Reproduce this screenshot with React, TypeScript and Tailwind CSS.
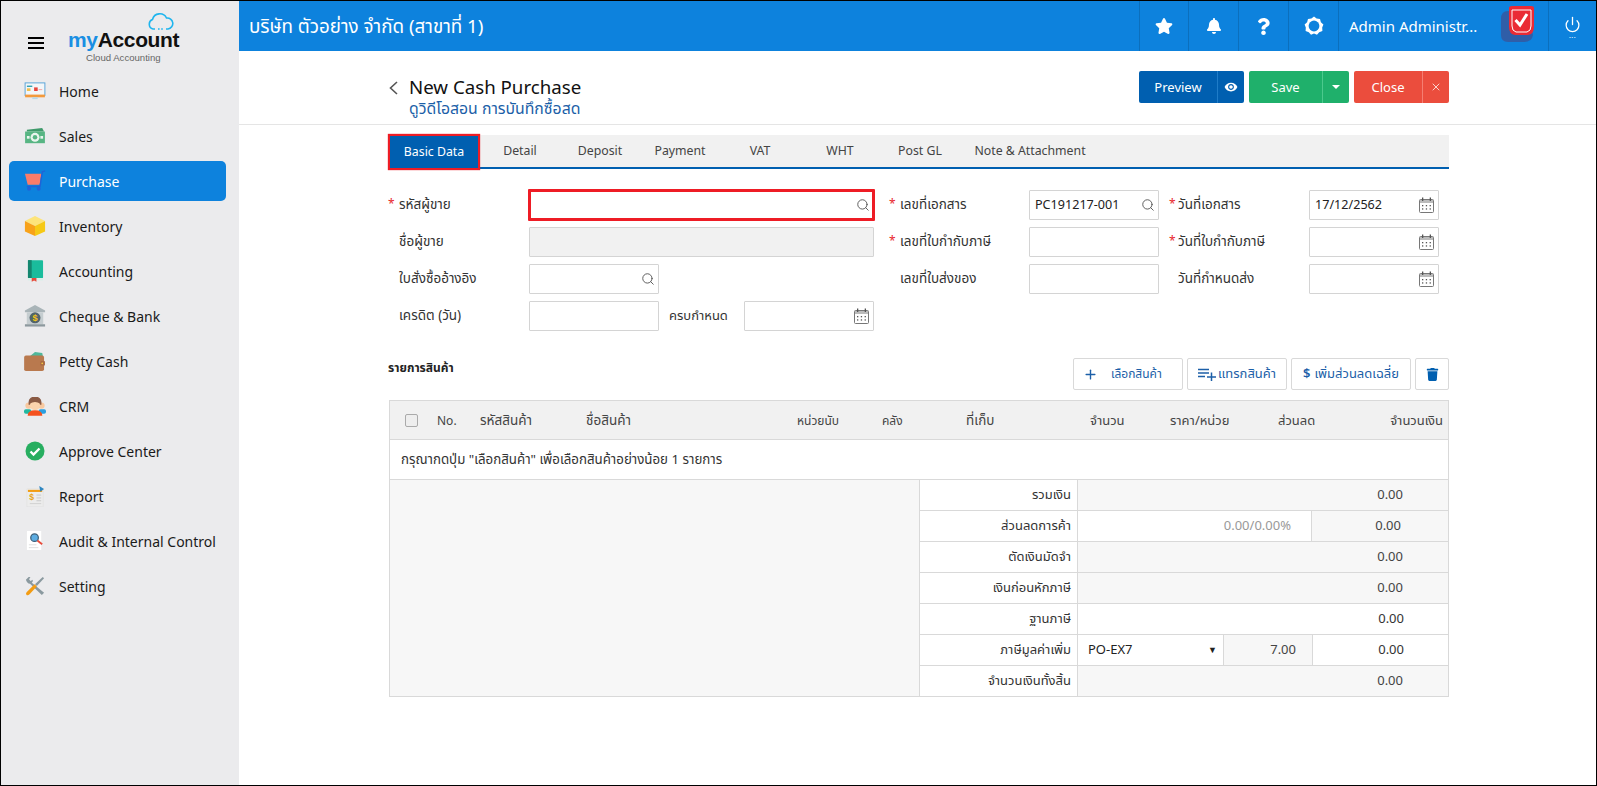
import React from "react";
import { FaStar, FaBell, FaQuestion, FaTrash } from "react-icons/fa";
import { MdRemoveRedEye } from "react-icons/md";
import { Search, Plus, X, Power } from "lucide-react";

const IconHome = () => (
  <svg width="22" height="18" viewBox="0 0 24 20">
    <rect x="1" y="1" width="22" height="14" fill="#f3f6f8" stroke="#4f9fd8" strokeWidth="1" />
    <rect x="1" y="14" width="22" height="3" fill="#f39a3c" />
    <rect x="9" y="17" width="6" height="2" fill="#b8d8e8" />
    <rect x="3" y="4" width="6" height="1.5" fill="#2a9fb0" />
    <rect x="3" y="7" width="4" height="3" fill="#f2c14e" />
    <rect x="11" y="6" width="4" height="4" fill="#e8453c" />
    <rect x="16" y="8" width="4" height="1" fill="#f2a0a0" />
  </svg>
);
const IconSales = () => (
  <svg width="22" height="18" viewBox="0 0 24 20">
    <path d="M3 3 L20 1 L22 5 L3 5Z" fill="#3f9a6b" />
    <rect x="1" y="5" width="22" height="13" fill="#57b583" />
    <circle cx="12" cy="11.5" r="5" fill="#e9f5ee" />
    <circle cx="12" cy="11.5" r="2.5" fill="#57b583" />
    <rect x="3" y="10" width="3" height="3" fill="#e9f5ee" />
    <rect x="18" y="10" width="3" height="3" fill="#e9f5ee" />
  </svg>
);
const IconCart = () => (
  <svg width="22" height="22" viewBox="0 0 24 24">
    <path d="M1 4 H19 L17 16 H4Z" fill="#fb7c6a" />
    <path d="M23 1 L20 2 L17.5 18 H3" fill="none" stroke="#1f63d8" strokeWidth="1.5" />
    <circle cx="5.5" cy="20.5" r="2.2" fill="#1f63d8" />
    <circle cx="16" cy="20.5" r="2.2" fill="#1f63d8" />
  </svg>
);
const IconBox = () => (
  <svg width="22" height="22" viewBox="0 0 24 24">
    <path d="M12 1 L23 6.5 L12 12 L1 6.5Z" fill="#fde47a" />
    <path d="M1 6.5 L12 12 V23 L1 18Z" fill="#f8a219" />
    <path d="M23 6.5 L12 12 V23 L23 18Z" fill="#f6c915" />
  </svg>
);
const IconBook = () => (
  <svg width="17" height="22" viewBox="0 0 18 23">
    <rect x="1" y="0" width="16" height="19" rx="1" fill="#1abc9c" />
    <rect x="1" y="0" width="4" height="19" fill="#14866f" />
    <rect x="1" y="19" width="16" height="2.5" fill="#d7efe8" />
    <path d="M5 19 H10 V23 L7.5 21.5 L5 23Z" fill="#e74c3c" />
  </svg>
);
const IconBank = () => (
  <svg width="22" height="22" viewBox="0 0 24 24">
    <path d="M12 0 L23 6 V8 H1 V6Z" fill="#a9b4b8" />
    <rect x="3" y="8" width="18" height="13" fill="#c5cdd0" />
    <circle cx="12" cy="14" r="6" fill="#52646b" />
    <text x="12" y="17.5" textAnchor="middle" fontSize="10" fontWeight="700" fill="#f5c518" fontFamily="Liberation Sans">$</text>
    <rect x="1" y="21" width="22" height="2.5" fill="#8d999e" />
  </svg>
);
const IconWallet = () => (
  <svg width="22" height="19" viewBox="0 0 24 21">
    <path d="M6 5 L12 0 L20 1 L21 6Z" fill="#4fb79a" />
    <rect x="0" y="4" width="22" height="17" rx="2" fill="#b9794e" />
    <rect x="18" y="10" width="5" height="5" rx="1" fill="#a86a42" />
    <circle cx="20" cy="12.5" r="1" fill="#f4c542" />
  </svg>
);
const IconCrm = () => (
  <svg width="22" height="19" viewBox="0 0 24 20">
    <circle cx="5" cy="9" r="3.5" fill="#f8c9a0" />
    <circle cx="19" cy="9" r="3.5" fill="#f8c9a0" />
    <rect x="0" y="13" width="8" height="5" rx="2" fill="#22b8a0" />
    <rect x="16" y="13" width="8" height="5" rx="2" fill="#2a9fe0" />
    <path d="M5 5 A7 6 0 0 1 19 5 V8 H5Z" fill="#8a5a44" />
    <circle cx="12" cy="8.5" r="5.5" fill="#fbd3ad" />
    <path d="M6 7 A6 5.5 0 0 1 18 7 Q12 3 6 7Z" fill="#8a5a44" />
    <path d="M4 20 Q4 14 12 14 Q20 14 20 20Z" fill="#f4511e" />
  </svg>
);
const IconApprove = () => (
  <svg width="20" height="20" viewBox="0 0 20 20">
    <circle cx="10" cy="10" r="9.5" fill="#27ae60" />
    <path d="M5.5 10.5 L8.5 13.5 L14.5 7.5" fill="none" stroke="#fff" strokeWidth="2.4" />
  </svg>
);
const IconReport = () => (
  <svg width="19" height="21" viewBox="0 0 20 22">
    <rect x="1" y="3" width="17" height="19" fill="#ececec" stroke="#dcdcdc" strokeWidth="0.5" />
    <rect x="2" y="4" width="15" height="2.2" fill="#f39c12" />
    <path d="M14 0 L19 3 L15 6Z" fill="#2e86c1" />
    <text x="6" y="15" textAnchor="middle" fontSize="9" fontWeight="700" fill="#e8a317" fontFamily="Liberation Sans">$</text>
    <rect x="11" y="9" width="5" height="1" fill="#c8c8c8" />
    <rect x="11" y="12" width="5" height="1" fill="#c8c8c8" />
    <rect x="11" y="15" width="5" height="1" fill="#c8c8c8" />
    <rect x="4" y="18" width="12" height="1" fill="#d0d0d0" />
  </svg>
);
const IconAudit = () => (
  <svg width="19" height="20" viewBox="0 0 20 21">
    <rect x="1" y="0" width="15" height="20" fill="#fff" />
    <rect x="3" y="14" width="8" height="1" fill="#ddd" />
    <rect x="3" y="17" width="10" height="1" fill="#ddd" />
    <circle cx="9" cy="7" r="4" fill="#5dade2" stroke="#3b5e78" strokeWidth="1.3" />
    <path d="M12 10 L17 14" stroke="#e74c3c" strokeWidth="2" />
  </svg>
);
const IconTools = () => (
  <svg width="20" height="20" viewBox="0 0 22 22">
    <path d="M1 4 L4 1 L6 1 L4.5 3.5 L6 5.5 L8.5 4 L8.5 6 L7.5 7.5 L21 18.5 L18.5 21 L5.5 8.5 Q2 8 1 4Z" fill="#8a999f" />
    <path d="M21 2.5 L19.5 1 L11 9 L13 11Z" fill="#8a999f" />
    <path d="M10.5 9 L13 11.5 L5 20 Q3 22 1.5 20.5 Q0.5 19 2 17.5Z" fill="#f39c12" />
  </svg>
);

const nav: [string, React.ReactNode][] = [
  ["Home", <IconHome />],
  ["Sales", <IconSales />],
  ["Purchase", <IconCart />],
  ["Inventory", <IconBox />],
  ["Accounting", <IconBook />],
  ["Cheque & Bank", <IconBank />],
  ["Petty Cash", <IconWallet />],
  ["CRM", <IconCrm />],
  ["Approve Center", <IconApprove />],
  ["Report", <IconReport />],
  ["Audit & Internal Control", <IconAudit />],
  ["Setting", <IconTools />],
];

const GearRing = () => (
  <svg width="20" height="20" viewBox="0 0 20 20">
    <path d="M10 0.5 L12.6 2.6 L16 2.9 L16.9 6.2 L19.4 8.5 L18.2 11.6 L18.4 15 L15.2 16.2 L13 18.8 L10 17.4 L7 18.8 L4.8 16.2 L1.6 15 L1.8 11.6 L0.6 8.5 L3.1 6.2 L4 2.9 L7.4 2.6Z" fill="#fff" />
    <circle cx="10" cy="10" r="5.4" fill="#0d82dd" />
  </svg>
);

const Calendar = () => (
  <svg width="15" height="16" viewBox="0 0 15 16">
    <rect x="0.5" y="2.5" width="14" height="13" rx="1" fill="#fff" stroke="#777" />
    <rect x="1" y="3" width="13" height="3" fill="#bbb" />
    <rect x="3" y="0.5" width="1.3" height="3.5" fill="#555" />
    <rect x="10.7" y="0.5" width="1.3" height="3.5" fill="#555" />
    <g fill="#555">
      <rect x="3" y="8" width="1.3" height="1.3" /><rect x="6.8" y="8" width="1.3" height="1.3" /><rect x="10.6" y="8" width="1.3" height="1.3" />
      <rect x="3" y="11.3" width="1.3" height="1.3" /><rect x="6.8" y="11.3" width="1.3" height="1.3" /><rect x="10.6" y="11.3" width="1.3" height="1.3" />
    </g>
  </svg>
);

const Label = ({ text, req, narrow }: { text: string; req?: boolean; narrow?: boolean }) => (
  <div className="flex items-center h-[30px] pb-[2px] text-[13.5px] text-[#333]">
    <span className={`${narrow ? "w-[9px]" : "w-[11px]"} text-[#e8262c] text-[12px] leading-none`}>{req ? "*" : ""}</span>
    <span>{text}</span>
  </div>
);

const Field = ({ w, icon, value, gray, red }: { w: string; icon?: "s" | "c"; value?: string; gray?: boolean; red?: boolean }) => (
  <div
    className={`${w} flex items-center justify-between text-[12.6px] text-[#222] rounded-[1px] ${
      red ? "h-[32px] pl-[5px] pr-[2px] border-[3px] border-[#ee1c25] -m-[1px]" : "h-[30px] pl-[5px] pr-[3px] border border-[#d4d4d4]"
    } ${gray ? "bg-[#f1f1f1]" : "bg-white"}`}
  >
    <span>{value}</span>
    {icon === "s" && <Search size={14} color="#555" strokeWidth={1.6} className="shrink-0" />}
    {icon === "c" && <span className="shrink-0 mr-[1px]"><Calendar /></span>}
  </div>
);

const SumRow = ({ label, children }: { label: string; children: React.ReactNode }) => (
  <div className="flex h-[31px] border-b border-[#d9d9d9] text-[13px]">
    <div className="w-[158px] shrink-0 border-r border-[#d9d9d9] flex items-center justify-end pr-[6px] text-[#333]">{label}</div>
    {children}
  </div>
);
const Gray = ({ v }: { v: string }) => (
  <div className="flex-1 bg-[#f7f7f7] flex items-center justify-end pr-[45px] text-[#444]">{v}</div>
);

export default function App() {
  return (
    <div
      className="w-[1597px] h-[786px] border border-black flex overflow-hidden bg-white"
      style={{ fontFamily: '"Noto Sans", "Noto Sans Thai", Tahoma, sans-serif' }}
    >
      <aside className="w-[238px] shrink-0 bg-[#ebebed] flex flex-col">
        <div className="h-[70px] shrink-0 relative">
          <div className="absolute left-[27px] top-[36px] w-[16px] flex flex-col gap-[3px]">
            <div className="h-[2px] bg-black" />
            <div className="h-[2px] bg-black" />
            <div className="h-[2px] bg-black" />
          </div>
          <svg className="absolute left-[146px] top-[12px]" width="27" height="18" viewBox="0 0 27 18">
            <path d="M8 16 H6 A5 5 0 0 1 5.5 6.5 A7.5 7.5 0 0 1 19.5 5 A5.5 5.5 0 0 1 21 16 H19" fill="none" stroke="#1fb5ee" strokeWidth="1.6" />
            <path d="M11 16 H16.5" stroke="#1fb5ee" strokeWidth="1.6" strokeDasharray="1.6 1.6" />
          </svg>
          <div className="absolute left-[67px] top-[24px] text-[21px] leading-[30px] font-bold tracking-[-0.35px]" style={{ fontFamily: '"Liberation Sans", sans-serif' }}>
            <span className="text-[#1a8fe3]">my</span><span className="text-[#111]">Account</span>
          </div>
          <div className="absolute left-[85px] top-[50px] text-[9.6px] leading-[13px] text-[#666]" style={{ fontFamily: '"Liberation Sans", sans-serif' }}>Cloud Accounting</div>
        </div>
        <nav className="flex flex-col gap-[5px] ml-[8px] w-[217px]">
          {nav.map(([name, icon]) => (
            <div
              key={name}
              className={`h-[40px] rounded-[5px] flex items-center text-[14px] ${name === "Purchase" ? "bg-[#0d82dd] text-white" : "text-[#1a1a1a]"}`}
            >
              <span className="w-[50px] shrink-0 flex justify-center pl-[2px]">{icon}</span>
              <span>{name}</span>
            </div>
          ))}
        </nav>
      </aside>

      <main className="flex-1 flex flex-col min-w-0">
        <header className="h-[50px] shrink-0 bg-[#0d82dd] flex items-center text-white">
          <div className="flex-1 pl-[10px] text-[18.8px]">บริษัท ตัวอย่าง จำกัด (สาขาที่ 1)</div>
          <div className="w-[49px] h-full border-l border-[#0b6fbd] flex items-center justify-center"><FaStar size={18} /></div>
          <div className="w-[50px] h-full border-l border-[#0b6fbd] flex items-center justify-center"><FaBell size={16} /></div>
          <div className="w-[50px] h-full border-l border-[#0b6fbd] flex items-center justify-center"><FaQuestion size={17} /></div>
          <div className="w-[50px] h-full border-l border-[#0b6fbd] flex items-center justify-center"><GearRing /></div>
          <div className="w-[210px] h-full border-l border-[#0b6fbd] flex items-center pl-[10px] relative">
            <span className="text-[15px]">Admin Administr...</span>
            <svg className="absolute right-[12px] top-[4px]" width="36" height="42" viewBox="0 0 36 42">
              <path d="M1 14 Q1 6 8 6 L26 6 L33 30 Q32 37 24 37 L8 37 Q1 37 1 30Z" fill="#2f5ea8" />
              <path d="M9 3 Q9 1 12 1 H31 Q34 1 34 3 V22 Q34 29 28 30 H15 Q9 29 9 22Z" fill="#ea2b35" />
              <path d="M12 5 H31 V21 Q31 26 27 27 H16 Q12 26 12 21Z" fill="none" stroke="#fff" strokeWidth="1" />
              <path d="M15.5 15 L20 20 L27 9" fill="none" stroke="#fff" strokeWidth="3" />
            </svg>
          </div>
          <div className="w-[48px] h-full border-l border-[#0b6fbd] flex flex-col items-center justify-center">
            <Power size={17} strokeWidth={1.8} />
            <span className="text-[7px] leading-[6px] tracking-[0.5px] h-[4px]">...</span>
          </div>
        </header>

        <div className="h-[74px] shrink-0 border-b border-[#e5e5e5] pl-[149px] pr-[147px] flex items-start justify-between">
          <div className="flex items-start mt-[22px]">
            <svg width="9" height="14" viewBox="0 0 9 14" className="mt-[8px] ml-[1px] mr-[11px]">
              <path d="M8 1 L1.5 7 L8 13" fill="none" stroke="#555" strokeWidth="1.6" />
            </svg>
            <div>
              <div className="text-[18.7px] leading-[27px] text-[#111]">New Cash Purchase</div>
              <div className="text-[15.8px] leading-[20px] -mt-[2px] text-[#1c5fa8]">ดูวิดีโอสอน การบันทึกซื้อสด</div>
            </div>
          </div>
          <div className="flex gap-[5px] text-white text-[13px] mt-[20px]">
            <div className="flex w-[105px] h-[32px] bg-[#005fb0] rounded-[2px]">
              <div className="w-[79px] pt-[1px] flex items-center justify-center border-r border-[#1f7cc8]">Preview</div>
              <div className="flex-1 flex items-center justify-center"><MdRemoveRedEye size={14} /></div>
            </div>
            <div className="flex w-[100px] h-[32px] bg-[#1fb06b] rounded-[2px]">
              <div className="w-[74px] pt-[1px] flex items-center justify-center border-r border-[#4cc98d]">Save</div>
              <div className="flex-1 flex items-center justify-center"><span className="w-0 h-0 border-l-[4px] border-r-[4px] border-t-[4px] border-l-transparent border-r-transparent border-t-white" /></div>
            </div>
            <div className="flex w-[95px] h-[32px] bg-[#eb4d3d] rounded-[2px]">
              <div className="w-[69px] pt-[1px] flex items-center justify-center border-r border-[#f57e72]">Close</div>
              <div className="flex-1 flex items-center justify-center"><X size={12} strokeWidth={1.5} /></div>
            </div>
          </div>
        </div>

        <div className="pl-[149px] pr-[147px] pt-[10px]">
          <div className="flex h-[34px] bg-[#f1f1f1] border-b-2 border-[#005fb0] text-[12.3px] text-[#444]">
            <div className="w-[92px] h-[36px] -mt-[1px] pt-[1px] border-[2px] border-[#ee1c25] shadow-[0_0_1px_#ee1c25] bg-[#005fb0] text-white flex items-center justify-center">Basic Data</div>
            {["Detail", "Deposit", "Payment", "VAT", "WHT", "Post GL"].map((t) => (
              <div key={t} className="w-[80px] pt-[1px] flex items-center justify-center">{t}</div>
            ))}
            <div className="w-[140px] pt-[1px] flex items-center justify-center">Note &amp; Attachment</div>
          </div>

          <div className="grid grid-cols-[141px_345px_155px_130px_150px_130px] gap-y-[7px] mt-[21px]">
            <Label text="รหัสผู้ขาย" req />
            <Field w="w-[347px]" icon="s" red />
            <div className="pl-[15px]"><Label text="เลขที่เอกสาร" req /></div>
            <Field w="w-[130px]" icon="s" value="PC191217-001" />
            <div className="pl-[10px]"><Label text="วันที่เอกสาร" req narrow /></div>
            <Field w="w-[130px]" icon="c" value="17/12/2562" />

            <Label text="ชื่อผู้ขาย" />
            <Field w="w-[345px]" gray />
            <div className="pl-[15px]"><Label text="เลขที่ใบกำกับภาษี" req /></div>
            <Field w="w-[130px]" />
            <div className="pl-[10px]"><Label text="วันที่ใบกำกับภาษี" req narrow /></div>
            <Field w="w-[130px]" icon="c" />

            <Label text="ใบสั่งซื้ออ้างอิง" />
            <Field w="w-[130px]" icon="s" />
            <div className="pl-[15px]"><Label text="เลขที่ใบส่งของ" /></div>
            <Field w="w-[130px]" />
            <div className="pl-[10px]"><Label text="วันที่กำหนดส่ง" narrow /></div>
            <Field w="w-[130px]" icon="c" />

            <Label text="เครดิต (วัน)" />
            <div className="flex items-center">
              <Field w="w-[130px]" />
              <span className="ml-[10px] w-[75px] text-[13px] text-[#333]">ครบกำหนด</span>
              <Field w="w-[130px]" icon="c" />
            </div>
          </div>

          <div className="flex items-center justify-between mt-[27px] h-[32px]">
            <div className="text-[12px] font-bold text-[#222] -mt-[13px]">รายการสินค้า</div>
            <div className="flex gap-[4px] text-[13px] text-[#1c5fa8]">
              <div className="w-[110px] h-[32px] border border-[#d9d9d9] rounded-[2px] flex items-center pl-[9px] gap-[13px] text-[12px]"><Plus size={15} strokeWidth={2.2} />เลือกสินค้า</div>
              <div className="w-[100px] h-[32px] border border-[#d9d9d9] rounded-[2px] flex items-center justify-center">
                <svg width="20" height="14" viewBox="0 0 20 14" className="shrink-0">
                  <path d="M0 2.5 H11 M0 6 H11 M0 9.5 H7 M9 10 H18 M13.5 5.5 V14" stroke="#1c5fa8" strokeWidth="1.5" fill="none" />
                </svg>
                แทรกสินค้า
              </div>
              <div className="w-[120px] h-[32px] border border-[#d9d9d9] rounded-[2px] flex items-center justify-center gap-[4px]"><span className="font-semibold">$</span>เพิ่มส่วนลดเฉลี่ย</div>
              <div className="w-[34px] h-[32px] border border-[#d9d9d9] rounded-[2px] flex items-center justify-center"><FaTrash size={13} color="#005fb0" /></div>
            </div>
          </div>

          <div className="mt-[10px] ml-[1px] border border-[#d9d9d9] border-b-0">
            <div className="flex h-[39px] items-center pt-[1px] bg-[#f1f1f1] border-b border-[#d9d9d9] text-[13px] text-[#444]">
              <div className="w-[47px] shrink-0 pl-[15px]"><div className="w-[13px] h-[13px] border border-[#aaa] rounded-[2px] bg-[#eee]" /></div>
              <div className="w-[43px] shrink-0 text-[12px]">No.</div>
              <div className="w-[106px] shrink-0 text-[13.5px]">รหัสสินค้า</div>
              <div className="w-[211px] shrink-0 text-[13.5px]">ชื่อสินค้า</div>
              <div className="w-[85px] shrink-0 text-[12px]">หน่วยนับ</div>
              <div className="w-[84px] shrink-0 text-[12px]">คลัง</div>
              <div className="w-[124px] shrink-0 text-[13.5px]">ที่เก็บ</div>
              <div className="w-[80px] shrink-0">จำนวน</div>
              <div className="w-[108px] shrink-0">ราคา/หน่วย</div>
              <div className="w-[60px] shrink-0">ส่วนลด</div>
              <div className="flex-1 text-right pr-[5px]">จำนวนเงิน</div>
            </div>
            <div className="h-[40px] flex items-center pl-[11px] border-b border-[#d9d9d9] text-[13.3px] text-[#333]">กรุณากดปุ่ม "เลือกสินค้า" เพื่อเลือกสินค้าอย่างน้อย 1 รายการ</div>
            <div className="flex">
              <div className="w-[530px] shrink-0 bg-[#f7f7f7] border-r border-[#d9d9d9] border-b" />
              <div className="flex-1 flex flex-col">
                <SumRow label="รวมเงิน"><Gray v="0.00" /></SumRow>
                <SumRow label="ส่วนลดการค้า">
                  <div className="w-[233px] flex items-center justify-end pr-[20px] text-[#999]">0.00/0.00%</div>
                  <div className="flex-1 bg-[#f7f7f7] border-l border-[#d9d9d9] flex items-center justify-end pr-[47px] text-[#444]">0.00</div>
                </SumRow>
                <SumRow label="ตัดเงินมัดจำ"><Gray v="0.00" /></SumRow>
                <SumRow label="เงินก่อนหักภาษี"><Gray v="0.00" /></SumRow>
                <SumRow label="ฐานภาษี">
                  <div className="flex-1 flex items-center justify-end pr-[44px] text-[#333]">0.00</div>
                </SumRow>
                <SumRow label="ภาษีมูลค่าเพิ่ม">
                  <div className="w-[145px] flex items-center justify-between pl-[10px] pr-[6px] text-[#222]"><span>PO-EX7</span><span className="text-[9px]">▼</span></div>
                  <div className="w-[90px] bg-[#f7f7f7] border-x border-[#d9d9d9] flex items-center justify-end pr-[16px] text-[#444]">7.00</div>
                  <div className="flex-1 flex items-center justify-end pr-[44px] text-[#333]">0.00</div>
                </SumRow>
                <SumRow label="จำนวนเงินทั้งสิ้น"><Gray v="0.00" /></SumRow>
              </div>
            </div>
          </div>
        </div>
      </main>
    </div>
  );
}
